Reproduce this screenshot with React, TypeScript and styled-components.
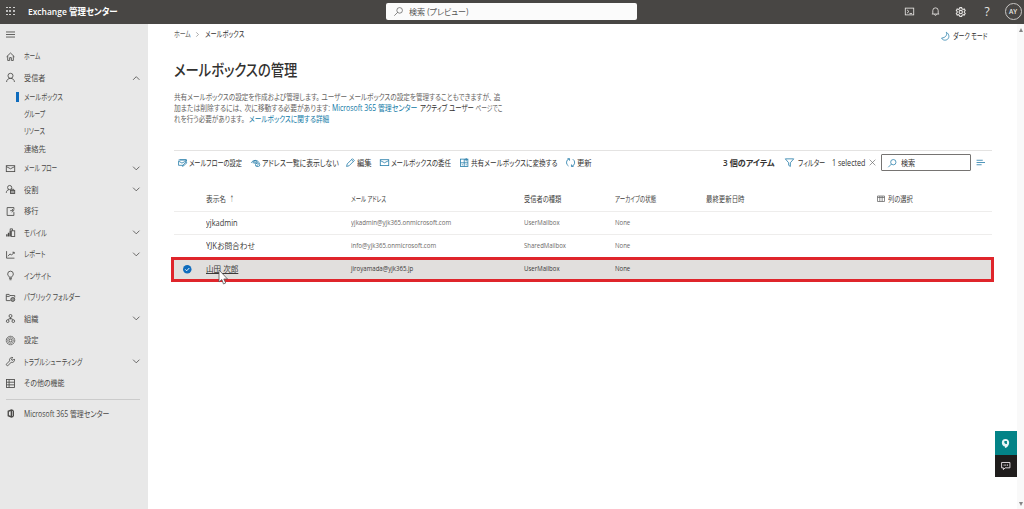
import React, { useLayoutEffect, useRef, useState } from "react";
import styled, { createGlobalStyle } from "styled-components";

const Global = createGlobalStyle`
  * { box-sizing: border-box; }
  body { margin: 0; overflow: hidden; background: #fff; }
  body, input, button { font-family: "Open Sans", "Noto Sans CJK JP", sans-serif; }
`;

/* Text set condensed or expanded to an exact advance width */
const FitBox = styled.span<{ $w: number }>`
  display: inline-block;
  flex: none;
  width: ${p => p.$w}px;
  white-space: pre;
`;
const FitInner = styled.span`
  display: inline-block;
  transform-origin: 0 50%;
  font-feature-settings: "palt";
`;
function Fit({ w, children }: { w: number; children: React.ReactNode }) {
  const ref = useRef<HTMLSpanElement>(null);
  const [scale, setScale] = useState(1);
  useLayoutEffect(() => {
    if (ref.current) setScale(w / ref.current.offsetWidth);
  }, [w, children]);
  return (
    <FitBox $w={w}>
      <FitInner ref={ref} style={{ transform: `scaleX(${scale})` }}>{children}</FitInner>
    </FitBox>
  );
}

const Svg = styled.svg<{ $s: number; $c?: string; $sw?: number }>`
  display: block;
  flex: none;
  width: ${p => p.$s}px;
  height: ${p => p.$s}px;
  fill: none;
  stroke: ${p => p.$c || "currentColor"};
  stroke-width: ${p => p.$sw || 1.5};
  overflow: visible;
`;

const shapes: Record<string, React.ReactNode> = {
  menu: <path d="M0 3.500h16M0 8h16M0 12.500h16" />,
  home: <path d="M1 8.500 8 1.800l7 6.700M3 7v8h3.500v-5h3v5H13V7" />,
  person: <><circle cx="8" cy="5" r="4.500" /><path d="M1 16c0-3.700 3-6.500 7-6.500s7 2.800 7 6.500" /></>,
  mail: <><rect x=".5" y="3" width="15" height="10.500" /><path d="m.5 4.500 7.500 4 7.500-4" /></>,
  role: <><circle cx="6.500" cy="4.500" r="3.700" /><path d="M.5 14c0-3.200 2-5.500 5-5.800" /><rect x="8" y="9.500" width="7.500" height="5.500" fill="currentColor" fillOpacity=".45" /><path d="M10 9.500v-2h3.500v2" /></>,
  migrate: <><path d="M9 1H2v14h12V9M14 5V1H9" /><path d="M7.500 6.500h5.500M10.500 3.500l3 3-3 3" /></>,
  mobile: <><path d="M1.500 15v-4M4.500 15V8.500M7.500 15V5" strokeWidth="2.400" /><rect x="9.500" y="5" width="6" height="10" /><path d="M7.500 5V1.500h4V5" /></>,
  report: <path d="M1 2v12.500h14M3.500 11l3.500-4 3 2 4.500-5M11.500 4h3v3" />,
  bulb: <path d="M5.500 11c0-2-2.500-2.800-2.500-5.700a5 5 0 0 1 10 0c0 2.900-2.500 3.700-2.500 5.700ZM5.500 13.200h5M6.200 15.500h3.600" />,
  folder: <><path d="M8 13.500H.5v-11h5l1.500 2h8.500V8M.5 6H6l1-1.500" /><circle cx="12" cy="11.500" r="3.500" fill="currentColor" fillOpacity=".5" /></>,
  org: <><circle cx="8" cy="3.500" r="2.600" /><circle cx="3" cy="12.700" r="2.400" /><circle cx="13" cy="12.700" r="2.400" /><path d="M8 6v3M3.500 10.500 5 8.500h6l1.500 2" /></>,
  gear: <><circle cx="8" cy="8" r="7.500" strokeDasharray="3.400 .6" /><circle cx="8" cy="8" r="5.200" strokeWidth="1" /><circle cx="8" cy="8" r="2.600" /></>,
  wrench: <path d="M14.800 3.500 12.500 5.800l-2.200-.4-.4-2.200L12.200 1A4.500 4.500 0 0 0 6.500 6.800L1.200 12.200a1.800 1.800 0 0 0 2.600 2.600L9.200 9.500a4.500 4.500 0 0 0 5.600-6Z" />,
  grid: <><rect x="1" y="1" width="14" height="14" /><path d="M1 5.700h14M1 10.400h14M5.500 1v14" /></>,
  office: <path d="M13 3.200v9.600M13 3 9.500 1.800 4 4v8l5.500 2.200L13 13M9.500 2v12" strokeWidth="2.400" />,
  search: <><circle cx="10" cy="6" r="5" /><path d="m6.500 9.500-6 6" /></>,
  shell: <><rect x=".5" y="2" width="15" height="12" /><path d="m3.500 5 3.500 3-3.500 3M8 11.500h4.500" /></>,
  bell: <path d="M1.500 12.500h13M3.200 12.500V6.300a4.800 4.800 0 0 1 9.600 0v6.200M6.200 13c.3 2.500 3.300 2.500 3.600 0" />,
  cog: <><path d="M6.500 1h3l.5 2 2 1.100 2-.7 1.500 2.700-1.500 1.400v2l1.500 1.400-1.500 2.700-2-.7-2 1.100-.5 2h-3L6 14l-2-1.100-2 .7-1.500-2.700L2 9.500v-2L.5 6.100 2 3.400l2 .7L6 3Z" /><circle cx="8" cy="8.500" r="2.800" /></>,
  moon: <path d="M10 .5c2 5.500-1 10-9 11 2.500 4.500 8 5 11.500 2S16 4 10 .5Z" />,
  flow: <><path d="M1 5.500V13h8M1 5.500l6 3.500 8-4V3H3M1 3.500h13.500V8" /><path d="M15.500 8.500 10 14l-2 .8.700-2L14 7.500Z" /></>,
  hide: <><path d="M.5 8.500C3 3.500 10.500 2.500 14.500 8M4 9.500a3.500 3.500 0 1 1 5.500 1" /><circle cx="7" cy="8" r="1.500" /><rect x="8" y="9" width="7.500" height="6" rx="2.500" /><path d="m9.500 14.500 4.500-4.500" /></>,
  pencil: <path d="m1 15 1.200-4.500L11.500 1.200l3.300 3.300L5.500 13.800ZM9.800 3l3.300 3.300" />,
  convert: <><rect x="1" y="2" width="13" height="13" /><path d="M7.500 2v13M1 8.500h13M11 0v6M8 3h6M4 11v2M11 11v2" /></>,
  refresh: <path d="M6 1.300A7 7 0 0 0 4.500 14.200M10 14.900A7 7 0 0 0 12 2.100M2.500 1.300h3.800v3.500M13.500 15H9.700v-3.500" />,
  filter: <path d="M.5 1.500h15L9.500 8.500V15l-3-2V8.500Z" />,
  close: <path d="m1.500 1.500 13 13M14.500 1.500l-13 13" />,
  list: <path d="M1 4h11M1 8h15M1 12h9" />,
  columns: <path d="M1 2h14v11H1ZM1 5h14M5.600 2v11M10.300 2v11" />,
  check: <><circle cx="8" cy="8" r="8" fill="#0f6cbd" stroke="none" /><path d="m4.200 8.200 2.700 2.700 5-5.200" stroke="#fff" strokeWidth="1.800" /></>,
  down: <path d="m2 5 6 6 6-6" />,
  up: <path d="m2 11 6-6 6 6" />,
  right: <path d="m4 1 7 7-7 7" />,
  headset: <><path d="M8 0C3.500 0 1.500 3 1.500 6.500S4 13 7 13.200V16c4-1 7.500-5 7.500-9.500C14.500 3 12 0 8 0Z" fill="#e8f6f6" stroke="none" /><path d="M6 3.500h4.500v5.500h-2l-2.500-2Z" fill="#038387" stroke="none" /></>,
  chat: <><path d="M1 2.500h14v9H7l-3 3v-3H1Z" /><path d="M4.500 7h1.500M7.300 7h1.500M10.200 7h1.500" strokeWidth="1.800" /></>,
};
function Icon({ name, s = 9, c, sw }: { name: string; s?: number; c?: string; sw?: number }) {
  return <Svg viewBox="0 0 16 16" $s={s} $c={c} $sw={sw}>{shapes[name]}</Svg>;
}

const Page = styled.div`
  position: relative;
  width: 1024px;
  height: 509px;
  display: flex;
  flex-direction: column;
  overflow: hidden;
  color: #323130;
  font-size: 8.300px;
  line-height: 12px;
`;
const Header = styled.header`
  height: 24px;
  flex: none;
  display: flex;
  align-items: center;
  background: #484644;
  color: #fff;
  padding-left: 6px;
`;
const Waffle = styled.div`
  display: grid;
  grid-template-columns: repeat(3, 1.600px);
  gap: 1.900px;
  width: 22px;
  margin-top: -2px;
  i { height: 1.600px; background: #e4e4e4; border-radius: 1px; }
`;
const Brand = styled.div`
  font-size: 9.300px;
  font-weight: 600;
  width: 357.500px;
  margin-top: -1px;
`;
const TopSearch = styled.div`
  width: 251.500px;
  height: 17.500px;
  margin-top: -1px;
  display: flex;
  align-items: center;
  gap: 6px;
  padding-left: 8.500px;
  background: #fbfbfb;
  border-radius: 2px;
  color: #555;
  font-size: 8.500px;
`;
const HeaderIcons = styled.div`
  display: flex;
  align-items: center;
  margin: -1px 2.500px 0 auto;
  color: #e8e6e4;
`;
const HeaderIcon = styled.div<{ $w: number }>`
  width: ${p => p.$w}px;
  display: flex;
  justify-content: center;
  font-size: 12px;
`;
const Avatar = styled.div`
  width: 17px;
  height: 17px;
  margin-left: 4.500px;
  border: 1px solid #c8c6c4;
  border-radius: 50%;
  display: flex;
  align-items: center;
  justify-content: center;
  font-size: 6.500px;
  font-weight: 600;
`;
const Body = styled.div`
  flex: 1;
  display: flex;
  min-height: 0;
`;
const Sidebar = styled.nav`
  width: 148.300px;
  flex: none;
  background: #e8e8e8;
  color: #4a4947;
  padding-left: 6px;
`;
const Burger = styled.div`
  height: 21.500px;
  display: flex;
  align-items: center;
`;
const NavRow = styled.div`
  height: 21.500px;
  display: flex;
  align-items: center;
  padding-right: 8px;
`;
const NavIcon = styled.span`
  width: 18px;
  flex: none;
`;
const NavArrow = styled.span`
  margin-left: auto;
`;
const SubRow = styled.div<{ $active?: boolean }>`
  height: 17.200px;
  margin-left: 10px;
  display: flex;
  align-items: center;
  &::before {
    content: "";
    width: 2.500px;
    height: 10px;
    margin-right: 5.500px;
    background: ${p => (p.$active ? "#0f6cbd" : "transparent")};
  }
`;
const Divider = styled.div`
  height: 1px;
  width: 134px;
  margin: 5px 0 3px;
  background: #cbcbcb;
`;
const Main = styled.main`
  flex: 1;
  min-width: 0;
  padding-left: 25.700px;
`;
const Crumbs = styled.div`
  height: 20px;
  display: flex;
  align-items: center;
  color: #605e5c;
`;
const CrumbArrow = styled.span`
  margin: 0 5px 0 4.500px;
`;
const DarkMode = styled.div`
  margin: 4px 29.500px 0 auto;
  display: flex;
  align-items: center;
  gap: 4px;
  color: #323130;
`;
const Current = styled.span`
  color: #323130;
`;
const Title = styled.h1`
  margin: 14px 0 0;
  height: 24px;
  font-size: 16px;
  line-height: 24px;
  font-weight: 500;
`;
const Intro = styled.div`
  margin: 10px 0 0 .5px;
  color: #666462;
`;
const Line = styled.div`
  height: 10.900px;
  display: flex;
  align-items: center;
`;
const Link = styled.span`
  color: #0f78a5;
  margin-left: 2px;
`;
const Strong = styled.span`
  color: #323130;
  margin-left: 2.500px;
`;
const Toolbar = styled.div`
  width: 818px;
  height: 25px;
  margin-top: 25.300px;
  border-top: 1px solid #e4e3e2;
  display: flex;
  align-items: center;
  padding-left: 3.800px;
`;
const Tool = styled.div<{ $w: number; $gap?: number }>`
  width: ${p => p.$w}px;
  flex: none;
  display: flex;
  align-items: center;
  gap: ${p => p.$gap ?? 2}px;
`;
const Count = styled.div`
  width: 61.500px;
  font-weight: 600;
  flex: none;
`;
const SearchBox = styled.div`
  width: 90px;
  height: 17px;
  flex: none;
  display: flex;
  align-items: center;
  gap: 5px;
  padding-left: 6px;
  margin-right: 5.500px;
  border: 1px solid #767472;
  border-radius: 1px;
`;
const Table = styled.div`
  width: 818px;
  margin-top: 13px;
`;
const TRow = styled.div<{ $h: number; $selected?: boolean }>`
  position: relative;
  height: ${p => p.$h}px;
  display: grid;
  grid-template-columns: 32.300px 145px 172.500px 91px 91.500px 171px 1fr;
  align-items: center;
  color: ${p => (p.$selected ? "#3b3a39" : "#6a6866")};
  font-size: 7px;
  background: ${p => (p.$selected ? "#e1dfdd" : "#fff")};
  border-bottom: 1px solid ${p => (p.$selected ? "transparent" : "#eeedec")};
`;
const HeadRow = styled(TRow)`
  color: #403e3c;
  font-size: 7.500px;
`;
const HeadCell = styled.div`
  display: flex;
  align-items: center;
  gap: 3px;
`;
const Name = styled.div<{ $u?: boolean }>`
  font-size: 8.300px;
  color: #3b3a39;
  span span { text-decoration: ${p => (p.$u ? "underline" : "none")}; text-underline-offset: 1px; }
`;
const Mark = styled.div`
  padding-left: 9px;
`;
const Highlight = styled.div`
  position: absolute;
  inset: -1px -2.500px -1.500px -3px;
  border: 3px solid #df252b;
`;
const Cursor = styled.svg`
  position: absolute;
  left: 44.500px;
  top: 11px;
  width: 11px;
  height: 16px;
`;
const ScrollTrack = styled.div`
  width: 7px;
  flex: none;
  background: #f9f9f9;
  display: flex;
  flex-direction: column;
  justify-content: space-between;
  align-items: center;
  padding: 4px 0 3px 1px;
`;
const ScrollArrow = styled.i<{ $down?: boolean }>`
  border: 2.800px solid transparent;
  ${p => (p.$down ? "border-top: 4.5px solid #858585; border-bottom: 0;" : "border-bottom: 4.5px solid #858585; border-top: 0;")}
`;
const FloatStack = styled.div`
  position: absolute;
  left: 995px;
  top: 431px;
  width: 21.500px;
`;
const FloatButton = styled.div<{ $bg: string; $h: number }>`
  height: ${p => p.$h}px;
  background: ${p => p.$bg};
  color: #f0e8ee;
  display: flex;
  align-items: center;
  justify-content: center;
`;

type Nav = { icon: string; label: string; w: number; arrow?: "up" | "down"; kids?: [string, number][] };
const nav: Nav[] = [
  { icon: "home", label: "ホーム", w: 16.5 },
  { icon: "person", label: "受信者", w: 21.5, arrow: "up", kids: [["メールボックス", 38.5], ["グループ", 21.5], ["リソース", 21], ["連絡先", 22]] },
  { icon: "mail", label: "メール フロー", w: 33.5, arrow: "down" },
  { icon: "role", label: "役割", w: 14.7, arrow: "down" },
  { icon: "migrate", label: "移行", w: 14.7 },
  { icon: "mobile", label: "モバイル", w: 23, arrow: "down" },
  { icon: "report", label: "レポート", w: 21.5, arrow: "down" },
  { icon: "bulb", label: "インサイト", w: 27 },
  { icon: "folder", label: "パブリック フォルダー", w: 56.5 },
  { icon: "org", label: "組織", w: 14.7, arrow: "down" },
  { icon: "gear", label: "設定", w: 14.7 },
  { icon: "wrench", label: "トラブルシューティング", w: 58.5, arrow: "down" },
  { icon: "grid", label: "その他の機能", w: 40 },
];

const tools: { icon: string; label: string; w: number; tw: number }[] = [
  { icon: "flow", label: "メールフローの設定", w: 73, tw: 53 },
  { icon: "hide", label: "アドレス一覧に表示しない", w: 95.5, tw: 76.5 },
  { icon: "pencil", label: "編集", w: 34, tw: 15 },
  { icon: "mail", label: "メールボックスの委任", w: 80, tw: 60 },
  { icon: "convert", label: "共有メールボックスに変換する", w: 106, tw: 87 },
  { icon: "refresh", label: "更新", w: 157, tw: 15 },
];

const rows: { name: string; nw: number; mail: string; mw: number; type: string; tw: number; selected?: boolean; h: number }[] = [
  { name: "yjkadmin", nw: 31.5, mail: "yjkadmin@yjk365.onmicrosoft.com", mw: 100, type: "UserMailbox", tw: 35.5, h: 23 },
  { name: "YJKお問合わせ", nw: 49, mail: "info@yjk365.onmicrosoft.com", mw: 85, type: "SharedMailbox", tw: 42, h: 23 },
  { name: "山田 次郎", nw: 32, mail: "jiroyamada@yjk365.jp", mw: 62.5, type: "UserMailbox", tw: 35.5, h: 24, selected: true },
];

const blue = "#2f83ad";

export default function App() {
  return (
    <Page>
      <Global />
      <Header>
        <Waffle>{Array.from({ length: 9 }, (_, i) => <i key={i} />)}</Waffle>
        <Brand><Fit w={90}>Exchange 管理センター</Fit></Brand>
        <TopSearch><Icon name="search" s={9} c="#505050" sw={1.2} /><Fit w={59.5}>検索 (プレビュー)</Fit></TopSearch>
        <HeaderIcons>
          <HeaderIcon $w={26}><Icon name="shell" /></HeaderIcon>
          <HeaderIcon $w={26}><Icon name="bell" /></HeaderIcon>
          <HeaderIcon $w={26}><Icon name="cog" s={9.5} sw={1.8} /></HeaderIcon>
          <HeaderIcon $w={26}>?</HeaderIcon>
          <Avatar>AY</Avatar>
        </HeaderIcons>
      </Header>
      <Body>
        <Sidebar>
          <Burger><Icon name="menu" /></Burger>
          {nav.map(n => (
            <React.Fragment key={n.label}>
              <NavRow>
                <NavIcon><Icon name={n.icon} /></NavIcon>
                <Fit w={n.w}>{n.label}</Fit>
                {n.arrow && <NavArrow><Icon name={n.arrow} s={8.5} /></NavArrow>}
              </NavRow>
              {n.kids?.map(([label, w], i) => (
                <SubRow key={label} $active={i === 0}><Fit w={w}>{label}</Fit></SubRow>
              ))}
            </React.Fragment>
          ))}
          <Divider />
          <NavRow>
            <NavIcon><Icon name="office" /></NavIcon>
            <Fit w={85}>Microsoft 365 管理センター</Fit>
          </NavRow>
        </Sidebar>
        <Main>
          <Crumbs>
            <Fit w={17}>ホーム</Fit>
            <CrumbArrow><Icon name="right" s={5} c="#777" sw={2} /></CrumbArrow>
            <Current><Fit w={39}>メールボックス</Fit></Current>
            <DarkMode><Icon name="moon" s={8.5} c={blue} /><Fit w={34.5}>ダーク モード</Fit></DarkMode>
          </Crumbs>
          <Title><Fit w={123}>メールボックスの管理</Fit></Title>
          <Intro>
            <Line><Fit w={326}>共有メールボックスの設定を作成および管理します。 ユーザー メールボックスの設定を管理することもできますが、 追</Fit></Line>
            <Line>
              <Fit w={156}>加または削除するには、 次に移動する必要があります:</Fit>
              <Link><Fit w={85}>Microsoft 365 管理センター</Fit></Link>
              <Strong><Fit w={54}>アクティブ ユーザー</Fit></Strong>
              <Fit w={29}> ページでこ</Fit>
            </Line>
            <Line>
              <Fit w={70.5}>れを行う必要があります。</Fit>
              <Link><Fit w={2.5}> </Fit><Fit w={80}>メールボックスに関する詳細</Fit></Link>
            </Line>
          </Intro>
          <Toolbar>
            {tools.map(t => (
              <Tool key={t.label} $w={t.w}>
                <Icon name={t.icon} c={blue} />
                <Fit w={t.tw}>{t.label}</Fit>
              </Tool>
            ))}
            <Count><Fit w={51.5}>3 個のアイテム</Fit></Count>
            <Tool $w={47.5} $gap={4}><Icon name="filter" c={blue} /><Fit w={27}>フィルター</Fit></Tool>
            <Tool $w={48.5} $gap={3.5}><Fit w={33.5}>1 selected</Fit><Icon name="close" s={7} c="#666" /></Tool>
            <SearchBox><Icon name="search" s={8.5} c={blue} /><Fit w={14.5}>検索</Fit></SearchBox>
            <Icon name="list" c={blue} />
          </Toolbar>
          <Table>
            <HeadRow $h={24}>
              <span />
              <HeadCell><Fit w={20.5}>表示名</Fit><Fit w={4}>↑</Fit></HeadCell>
              <Fit w={35}>メール アドレス</Fit>
              <Fit w={37.5}>受信者の種類</Fit>
              <Fit w={41}>アーカイブの状態</Fit>
              <Fit w={38.5}>最終更新日時</Fit>
              <HeadCell><Icon name="columns" s={8} c="#666" /><Fit w={25}>列の選択</Fit></HeadCell>
            </HeadRow>
            {rows.map(r => (
              <TRow key={r.mail} $h={r.h} $selected={r.selected}>
                <Mark>{r.selected && <Icon name="check" s={8.5} />}</Mark>
                <Name $u={r.selected}><Fit w={r.nw}>{r.name}</Fit></Name>
                <Fit w={r.mw}>{r.mail}</Fit>
                <Fit w={r.tw}>{r.type}</Fit>
                <Fit w={15.5}>None</Fit>
                {r.selected && (
                  <>
                    <Highlight />
                    <Cursor viewBox="0 0 11 16">
                      <path d="M1 1v12l2.800-2.500L5.500 15l2.200-1-1.900-4h3.700Z" fill="#fff" stroke="#555" strokeWidth=".8" />
                    </Cursor>
                  </>
                )}
              </TRow>
            ))}
          </Table>
        </Main>
        <ScrollTrack><ScrollArrow /><ScrollArrow $down /></ScrollTrack>
      </Body>
      <FloatStack>
        <FloatButton $bg="#038387" $h={24}><Icon name="headset" s={9} /></FloatButton>
        <FloatButton $bg="#1f1d1c" $h={21.5}><Icon name="chat" s={9.5} /></FloatButton>
      </FloatStack>
    </Page>
  );
}
